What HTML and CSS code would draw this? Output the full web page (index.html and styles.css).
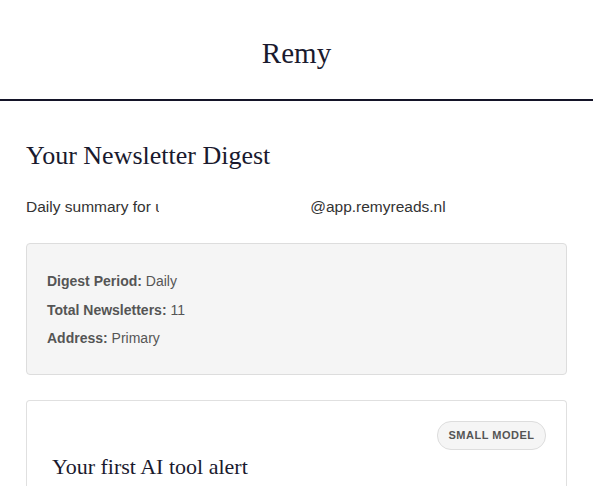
FILE: index.html
```html
<!DOCTYPE html>
<html lang="en">
<head>
<meta charset="utf-8">
<title>Remy</title>
<link rel="stylesheet" href="styles.css">
</head>
<body>
<header class="site-header">
  <div class="brand">Remy</div>
</header>
<main class="content">
  <h1 class="page-title">Your Newsletter Digest</h1>
  <p class="summary">Daily summary for <span class="clipped">u</span><span class="redacted"></span>@app.remyreads.nl</p>
  <section class="info-box">
    <p class="info-line"><strong>Digest Period:</strong> Daily</p>
    <p class="info-line"><strong>Total Newsletters:</strong> 11</p>
    <p class="info-line"><strong>Address:</strong> Primary</p>
  </section>
  <article class="card">
    <div class="card-top">
      <span class="badge">Small Model</span>
    </div>
    <h2 class="card-title">Your first AI tool alert</h2>
  </article>
</main>
</body>
</html>
```
FILE: styles.css
```css
html, body {
  margin: 0;
  padding: 0;
  background: #ffffff;
}
body {
  font-family: "Liberation Sans", Arial, sans-serif;
  color: #333333;
}
.site-header {
  height: 99px;
  border-bottom: 2px solid #141428;
  display: flex;
  align-items: center;
  justify-content: center;
}
.brand {
  font-family: "Liberation Serif", "Times New Roman", serif;
  font-size: 29px;
  line-height: 34px;
  color: #1a1a2e;
  padding-top: 6px;
}
.content {
  padding: 40px 26px 0;
}
.page-title {
  font-family: "Liberation Serif", "Times New Roman", serif;
  font-weight: normal;
  font-size: 26px;
  color: #1a1a2e;
  margin: 0 0 26px;
  line-height: 30px;
}
.summary {
  font-size: 15.5px;
  line-height: 20px;
  margin: 0 0 26px;
  color: #333333;
}
.clipped {
  display: inline-block;
  width: 4px;
  overflow: hidden;
  vertical-align: bottom;
}
.redacted {
  display: inline-block;
  width: 151px;
}
.info-box {
  background: #f5f5f5;
  border: 1px solid #dddddd;
  border-radius: 4px;
  padding: 28px 20px 26px;
  display: flex;
  flex-direction: column;
  gap: 9.5px;
}
.info-line {
  margin: 0;
  font-size: 14px;
  line-height: 19px;
  color: #555555;
}
.info-line strong {
  color: #555555;
}
.card {
  margin-top: 25px;
  border: 1px solid #e0e0e0;
  border-bottom: none;
  border-radius: 4px 4px 0 0;
  padding: 20px 20px 40px 25px;
}
.card-top {
  display: flex;
  justify-content: flex-end;
}
.badge {
  font-size: 11px;
  font-weight: bold;
  text-transform: uppercase;
  letter-spacing: 0.5px;
  color: #555555;
  background: #f5f5f5;
  border: 1px solid #dddddd;
  border-radius: 14px;
  padding: 7px 10.5px;
  line-height: 13px;
}
.card-title {
  font-family: "Liberation Serif", "Times New Roman", serif;
  font-weight: normal;
  font-size: 22px;
  color: #1a1a2e;
  margin: 4px 0 0;
  line-height: 26px;
}
```
